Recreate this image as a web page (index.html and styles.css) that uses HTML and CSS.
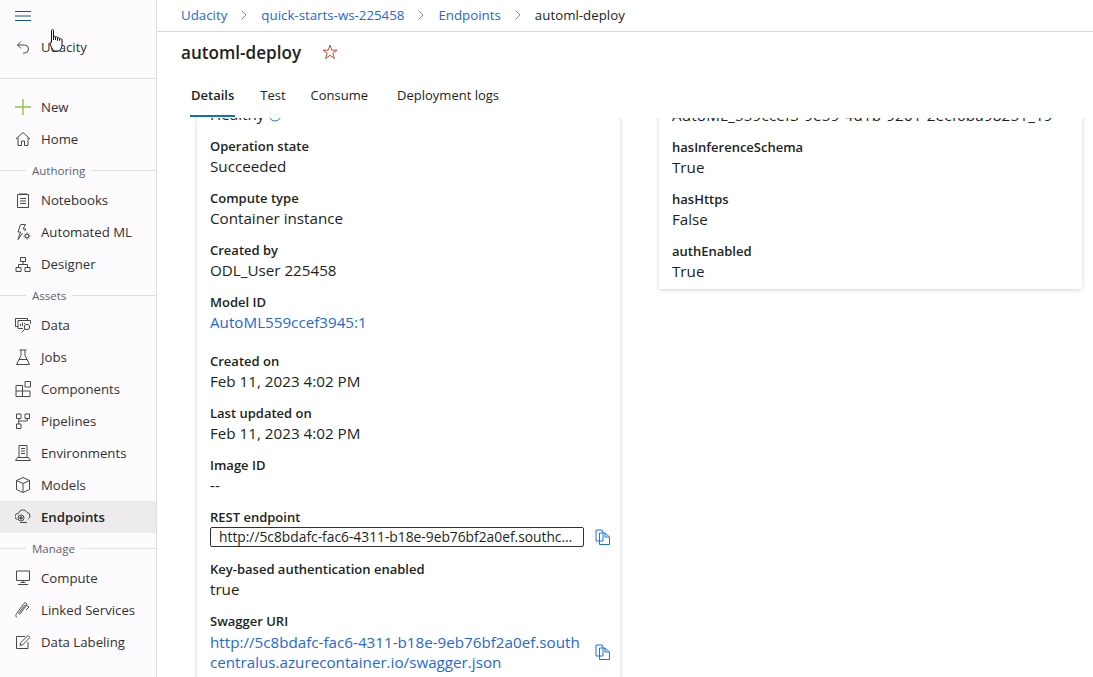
FILE: index.html
```html
<!DOCTYPE html>
<html lang="en">
<head>
  <meta charset="UTF-8">
  <title>automl-deploy</title>
  <link rel="stylesheet" href="styles.css">
</head>
<body>
  <aside class="sidebar">
    <button class="menu-btn" aria-label="Menu">
      <svg width="16" height="10" viewBox="0 0 16 10"><path d="M0 .5h16M0 5h16M0 9.500h16" stroke="#1b4f9e" fill="none"/></svg>
    </button>
    <a class="nav-item back">
      <svg class="icon" viewBox="0 0 16 16"><path d="M6 2.500 2.500 6 6 9.500M2.500 6h7a4 4 0 0 1 4 4v0a4 4 0 0 1-4 4H8"/></svg>
      <span>Udacity</span>
    </a>
    <hr class="divider">
    <a class="nav-item">
      <svg class="icon" viewBox="0 0 16 16"><path class="plus" d="M8 0v16M0 8h16"/></svg>
      <span>New</span>
    </a>
    <a class="nav-item">
      <svg class="icon" viewBox="0 0 16 16"><path d="M1 8 8 1.500 15 8M3 6.500V14.500h3.500V10h3v4.500H13V6.500"/></svg>
      <span>Home</span>
    </a>
    <div class="nav-heading">Authoring</div>
    <a class="nav-item">
      <svg class="icon" viewBox="0 0 16 16"><path d="M2.500 2.500h11v13h-11zM5 1v2M7 1v2M9 1v2M11 1v2M5 6.500h6M5 9h6M5 11.500h6"/></svg>
      <span>Notebooks</span>
    </a>
    <a class="nav-item">
      <svg class="icon" viewBox="0 0 16 16"><path d="M6 .5h4.500L8 5h3l-1.500 2M5.500.5 3 8h2.500L3 15.500 7.500 9"/><circle cx="12" cy="12" r="1.800"/><path d="M12 8.500v1.500M12 14v1.500M8.500 12H10M14 12h1.500M9.700 9.700l1 1M13.300 13.300l1 1M9.700 14.300l1-1M13.300 10.700l1-1"/></svg>
      <span>Automated ML</span>
    </a>
    <a class="nav-item">
      <svg class="icon" viewBox="0 0 16 16"><path d="M5.500 1.500h5v4h-5zM1 11.500h5v4H1zM10 11.500h5v4h-5zM8 5.500v3M3.500 11.500v-3h9v3"/></svg>
      <span>Designer</span>
    </a>
    <div class="nav-heading">Assets</div>
    <a class="nav-item">
      <svg class="icon" viewBox="0 0 16 16"><path d="M3 9.500H.5v-8h12v2M3 3.500h12.500V7M3 3.500v8h5M5.500 9V7M7.500 9V5.500M9.500 7V6"/><circle cx="12" cy="10" r="2.700"/><path d="M10 12 6.500 15.500"/></svg>
      <span>Data</span>
    </a>
    <a class="nav-item">
      <svg class="icon" viewBox="0 0 16 16"><path d="M4.500 1h7M6 1v5.500L1.500 15.500h13L10 6.500V1M4 10.500h8"/></svg>
      <span>Jobs</span>
    </a>
    <a class="nav-item">
      <svg class="icon" viewBox="0 0 16 16"><path d="M1 4.500h6.500v11H1zM1 10h14v5.500H7.500M7.500 4.500V10M10 .5h5.500V6H10z"/></svg>
      <span>Components</span>
    </a>
    <a class="nav-item">
      <svg class="icon" viewBox="0 0 16 16"><path d="M1.500 1h4.500v4.500H1.500zM10 1h4.500v4.500H10zM1.500 11H6v4.500H1.500zM3.700 5.500V11M12.300 5.500V8H3.700"/></svg>
      <span>Pipelines</span>
    </a>
    <a class="nav-item">
      <svg class="icon" viewBox="0 0 16 16"><path d="M4 .5h8v12H4zM.5 15.500h15L13.500 12.500h-11zM6 3.500h4M6 6h4M6 8.500h4"/></svg>
      <span>Environments</span>
    </a>
    <a class="nav-item">
      <svg class="icon" viewBox="0 0 16 16"><path d="M8 .5 14.500 3.500v9L8 15.500 1.500 12.500v-9zM1.500 3.500 8 6.500l6.500-3M8 6.500v9"/></svg>
      <span>Models</span>
    </a>
    <a class="nav-item active">
      <svg class="icon" viewBox="0 0 16 16"><path d="M2.500 10.500A3 3 0 0 1 3.500 4.500 4.500 4.500 0 0 1 12 3.500a3.500 3.500 0 0 1 3 3.500c0 1.500-1 2.500-2 3M5 13.500h7"/><circle cx="6" cy="9" r="3"/><circle cx="6" cy="9" r="1.200" class="dot"/></svg>
      <span>Endpoints</span>
    </a>
    <div class="nav-heading">Manage</div>
    <a class="nav-item">
      <svg class="icon" viewBox="0 0 16 16"><path d="M1.500 1h13v9.500h-13zM8 10.500v2M3 14.500h10M5.500 12.500h5"/></svg>
      <span>Compute</span>
    </a>
    <a class="nav-item">
      <svg class="icon" viewBox="0 0 16 16"><path d="M2 15.500c-2-1.500-1-3 0-4.500l7-9.500c1.500-1.500 3.500 0 2.500 1.500l-6 8.500M5.500 11.500c-1 1.500-2 .5-1.500-.5l6-8M11 3l3 2-3 3"/></svg>
      <span>Linked Services</span>
    </a>
    <a class="nav-item">
      <svg class="icon" viewBox="0 0 16 16"><path d="M13 8v6.500H1.500V2.500H10M5 11.500l.8-3L13 1.500l2 2-7.200 7.200z"/></svg>
      <span>Data Labeling</span>
    </a>
  </aside>

  <main class="main">
    <nav class="breadcrumb">
      <a>Udacity</a>
      <svg class="chev" viewBox="0 0 6 10"><path d="M.5.5 5 5 .5 9.500"/></svg>
      <a>quick-starts-ws-225458</a>
      <svg class="chev" viewBox="0 0 6 10"><path d="M.5.5 5 5 .5 9.500"/></svg>
      <a>Endpoints</a>
      <svg class="chev" viewBox="0 0 6 10"><path d="M.5.5 5 5 .5 9.500"/></svg>
      <span>automl-deploy</span>
    </nav>

    <div class="title-row">
      <h1>automl-deploy</h1>
      <svg class="star" viewBox="0 0 16 16"><path d="M8 1.200 9.800 6.200h5.200l-4.200 3.100 1.600 5.200L8 11.300l-4.400 3.200 1.600-5.200L1 6.200h5.200z"/></svg>
    </div>

    <div class="tabs">
      <a class="tab active">Details</a>
      <a class="tab tab-test">Test</a>
      <a class="tab tab-wide">Consume</a>
      <a class="tab">Deployment logs</a>
    </div>

    <div class="scroll">
      <div class="cards">
        <section class="card card-left">
          <div class="field">
            <div class="label">Deployment state</div>
            <div class="value">Healthy <svg class="info" viewBox="0 0 14 14"><circle cx="7" cy="7" r="6"/></svg></div>
          </div>
          <div class="field">
            <div class="label">Operation state</div>
            <div class="value">Succeeded</div>
          </div>
          <div class="field">
            <div class="label">Compute type</div>
            <div class="value">Container instance</div>
          </div>
          <div class="field">
            <div class="label">Created by</div>
            <div class="value">ODL_User 225458</div>
          </div>
          <div class="field field-link">
            <div class="label">Model ID</div>
            <div class="value"><a>AutoML559ccef3945:1</a></div>
          </div>
          <div class="field">
            <div class="label">Created on</div>
            <div class="value">Feb 11, 2023 4:02 PM</div>
          </div>
          <div class="field">
            <div class="label">Last updated on</div>
            <div class="value">Feb 11, 2023 4:02 PM</div>
          </div>
          <div class="field">
            <div class="label">Image ID</div>
            <div class="value">--</div>
          </div>
          <div class="field">
            <div class="label">REST endpoint</div>
            <div class="copy-row">
              <div class="endpoint">http://5c8bdafc-fac6-4311-b18e-9eb76bf2a0ef.southcentralus.azurecontainer.io/score</div>
              <svg class="copy" viewBox="0 0 16 16"><path d="M1 1h6l1 2.500V12H1zM4.500 4h5.500l4.500 4v7.500h-10zM10 4v4h4.500"/></svg>
            </div>
          </div>
          <div class="field">
            <div class="label">Key-based authentication enabled</div>
            <div class="value">true</div>
          </div>
          <div class="field">
            <div class="label">Swagger URI</div>
            <div class="copy-row copy-row-link">
              <a class="value swagger">http://5c8bdafc-fac6-4311-b18e-9eb76bf2a0ef.south<br>centralus.azurecontainer.io/swagger.json</a>
              <svg class="copy" viewBox="0 0 16 16"><path d="M1 1h6l1 2.500V12H1zM4.500 4h5.500l4.500 4v7.500h-10zM10 4v4h4.500"/></svg>
            </div>
          </div>
        </section>

        <section class="card card-right">
          <div class="field">
            <div class="label">Model name</div>
            <div class="value value-id">AutoML_559ccef3-9e59-4d1b-9201-2ecf6ba98251_19</div>
          </div>
          <div class="field">
            <div class="label">hasInferenceSchema</div>
            <div class="value">True</div>
          </div>
          <div class="field">
            <div class="label">hasHttps</div>
            <div class="value">False</div>
          </div>
          <div class="field">
            <div class="label">authEnabled</div>
            <div class="value">True</div>
          </div>
        </section>
      </div>
    </div>
  </main>

  <svg class="cursor" viewBox="0 0 14 23"><path d="M2 1.500c0-1.300 2-1.300 2 0V11V8c0-1 2-1 2 0v3V8.500c0-1 2-1 2 0V11.500V9.500c0-1 2-1 2 0V11.500 10.500c0-1 2.500-1 2.500 0V16c0 2.500-1.500 4-2.500 6H4C3 20 1.500 18 .7 15c-.3-1.500 0-2.500 1.300-1.500z"/></svg>
</body>
</html>
```
FILE: styles.css
```css
* {
  box-sizing: border-box;
}

html, body {
  height: 100%;
}

body {
  margin: 0;
  display: flex;
  overflow: hidden;
  font-family: "Open Sans", "Noto Sans", sans-serif;
  font-size: 13px;
  color: #201f1e;
  background: #fff;
}

a {
  color: inherit;
  text-decoration: none;
}

/* left nav */
.sidebar {
  width: 157px;
  flex: none;
  height: 677px;
  background: #fdfbfd;
  border-right: 1px solid #e1dfdd;
  color: #323130;
  font-size: 13.2px;
}

.menu-btn {
  display: flex;
  align-items: flex-start;
  height: 31px;
  width: 100%;
  padding: 11px 0 0 15px;
  margin: 0;
  border: 0;
  background: none;
}

.nav-item {
  display: flex;
  align-items: center;
  height: 32px;
  padding-left: 15px;
}

.nav-item span {
  margin-left: 10px;
}

.icon {
  width: 16px;
  height: 16px;
  flex: none;
  fill: none;
  stroke: #4a4847;
  stroke-width: 1;
}

.icon .plus {
  stroke: #8cc63f;
  stroke-width: 1.4;
}

.icon .dot {
  fill: #4a4847;
}

.divider {
  border: 0;
  border-top: 1px solid #e1dfdd;
  margin: 15px 0 12px;
}

.nav-item.active {
  background: #edebee;
  font-weight: 600;
  color: #201f1e;
}

.nav-heading {
  display: flex;
  align-items: center;
  gap: 6px;
  height: 29px;
  padding-top: 1px;
  font-size: 11.5px;
  color: #5a6472;
}

.nav-heading::before {
  content: "";
  width: 26px;
  border-top: 1px solid #e1dfdd;
}

.nav-heading::after {
  content: "";
  flex: 1;
  border-top: 1px solid #e1dfdd;
}

/* header */
.main {
  flex: 1;
  min-width: 0;
  height: 677px;
  display: flex;
  flex-direction: column;
}

.breadcrumb {
  display: flex;
  align-items: center;
  height: 32px;
  flex: none;
  padding: 0 0 2px 24px;
  border-bottom: 1px solid #d8d6d4;
  color: #201f1e;
  font-size: 13.3px;
}

.breadcrumb a {
  color: #2468d6;
}

.chev {
  width: 6px;
  height: 10px;
  margin: 0 14px;
  fill: none;
  stroke: #8a8886;
}

.title-row {
  display: flex;
  align-items: center;
  height: 42px;
  flex: none;
  padding: 0 0 2px 24px;
}

h1 {
  margin: 0;
  font-size: 17.1px;
  font-weight: 600;
  color: #201f1e;
}

.star {
  width: 16px;
  height: 16px;
  margin-left: 21px;
  fill: none;
  stroke: #c8452c;
}

.tabs {
  display: flex;
  height: 43px;
  flex: none;
  padding-left: 33px;
  margin-bottom: 1px;
  font-size: 13px;
}

.tab {
  display: flex;
  align-items: center;
  padding: 0 1px;
  margin-right: 24px;
  border-bottom: 2px solid transparent;
}

.tab.tab-test {
  margin-right: 23px;
}

.tab.tab-wide {
  margin-right: 27px;
}

.tab.active {
  font-weight: 600;
  border-bottom-color: #0f6cdb;
}

/* cards */
.scroll {
  flex: 1;
  min-height: 0;
  overflow: hidden;
}

.cards {
  display: flex;
  align-items: flex-start;
  gap: 39px;
  margin: -34px 0 0 40px;
}

.card {
  width: 423px;
  flex: none;
  background: #fff;
  padding: 0 13px 30px;
  box-shadow: 0 1px 4px rgba(0, 0, 0, .18);
}

.card-right {
  margin-top: 1px;
  padding-bottom: 6px;
}

.card-right .field:last-child {
  height: 42px;
}

.field {
  height: 52px;
}

.field-link {
  height: 59px;
}

.label {
  font-weight: 600;
  line-height: 21px;
  height: 20px;
}

.value {
  font-size: 15.2px;
  line-height: 21px;
  color: #201f1e;
}

.value-id {
  letter-spacing: .17px;
  white-space: nowrap;
}

.value a, a.swagger {
  color: #2468d6;
}

.info {
  width: 14px;
  height: 14px;
  vertical-align: -2px;
  fill: none;
  stroke: #2468d6;
}

.copy-row {
  display: flex;
  align-items: center;
  gap: 11px;
}

.copy-row-link {
  margin-top: 1px;
}

.endpoint {
  width: 374px;
  flex: none;
  height: 20px;
  line-height: 18px;
  padding: 0 8px;
  font-size: 13.8px;
  border: 1px solid #323130;
  border-radius: 2px;
  white-space: nowrap;
  overflow: hidden;
  text-overflow: ellipsis;
}

.swagger {
  width: 374px;
  flex: none;
  line-height: 20px;
  white-space: nowrap;
}

.copy {
  width: 16px;
  height: 16px;
  flex: none;
  fill: none;
  stroke: #1a73e8;
}

.cursor {
  position: absolute;
  left: 49px;
  top: 29px;
  width: 15px;
  height: 23px;
  fill: #fff;
  stroke: #111;
}
```
